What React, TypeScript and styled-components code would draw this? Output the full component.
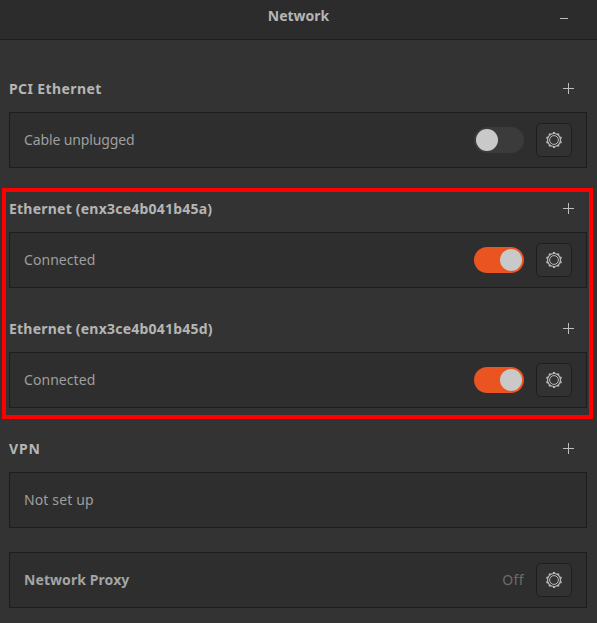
import React from 'react';
import styled, { createGlobalStyle } from 'styled-components';

const GlobalStyle = createGlobalStyle`
  * { box-sizing: border-box; }
  body {
    margin: 0;
    background: #333333;
    font-family: "Noto Sans", "Open Sans", sans-serif;
    font-size: 14px;
    line-height: 20px;
  }
`;

const Window = styled.div`
  position: relative;
  height: 623px;
  overflow: hidden;
  background: #333333;
`;

const TitleBar = styled.header`
  display: grid;
  grid-template-columns: 66px 1fr 66px;
  justify-items: center;
  height: 40px;
  padding-top: 6px;
  background: #2c2c2c;
  border-bottom: 1px solid #1e1e1e;
`;

const Text = styled.span<{ $spacing?: number }>`
  letter-spacing: ${(p) => p.$spacing ?? 0}px;
  white-space: pre;
`;

const Title = styled(Text)`
  grid-column: 2;
  color: #b5b5b5;
  font-weight: 700;
`;

const Minimize = styled.button`
  width: 8px;
  height: 1px;
  margin-top: 12px;
  padding: 0;
  border: 0;
  background: #bababa;
`;

const Content = styled.main`
  display: flex;
  flex-direction: column;
  gap: 24px;
  padding: 32px 10px 0 9px;
`;

const SectionHead = styled.div`
  display: flex;
  align-items: center;
  justify-content: space-between;
  height: 40px;
  padding: 7px 13px 14px 0;
`;

const Heading = styled(Text)`
  padding-top: 1px;
  color: #b5b5b5;
  font-weight: 700;
`;

const Panel = styled.div`
  display: flex;
  align-items: center;
  gap: 12px;
  height: 56px;
  padding: 0 14px;
  background: #2e2e2e;
  border: 1px solid #1d1d1d;
`;

const Label = styled(Text)<{ $bold?: boolean }>`
  flex: 1;
  color: ${(p) => (p.$bold ? '#a4a4a4' : '#9f9f9f')};
  font-weight: ${(p) => (p.$bold ? 700 : 400)};
`;

const Status = styled(Text)`
  color: #6c6c6c;
`;

const Switch = styled.button<{ $on: boolean }>`
  display: flex;
  align-items: center;
  justify-content: ${(p) => (p.$on ? 'flex-end' : 'flex-start')};
  width: 50px;
  height: 26px;
  padding: 0 2px;
  border: 0;
  border-radius: 13px;
  background: ${(p) => (p.$on ? '#e95420' : '#3b3b3b')};
`;

const Knob = styled.span`
  width: 22px;
  height: 22px;
  border-radius: 50%;
  background: #c9c9c9;
`;

const GearButton = styled.button`
  display: flex;
  align-items: center;
  justify-content: center;
  width: 36px;
  height: 34px;
  padding: 0;
  border: 1px solid #1e1e1e;
  border-radius: 5px;
  background: #323232;
`;

const Highlight = styled.div`
  position: absolute;
  left: 2px;
  top: 188px;
  width: 591px;
  height: 231px;
  border: 4px solid #ff0000;
  pointer-events: none;
`;

const teeth = Array.from({ length: 10 }, (_, i) => i * 36);

const Gear = () => (
  <GearButton aria-label="Settings">
    <svg width="16" height="16" viewBox="0 0 16 16" fill="none" stroke="#b8b8b8">
      <circle cx="8" cy="8" r="4.4" strokeWidth="1" />
      <circle cx="8" cy="8" r="6.5" strokeWidth="1.2" />
      {teeth.map((a) => (
        <path key={a} d="M8 0 V1.6" strokeWidth="2.2" transform={`rotate(${a} 8 8)`} />
      ))}
    </svg>
  </GearButton>
);

const Plus = () => (
  <svg width="11" height="11" viewBox="0 0 11 11" stroke="#bcbcbc" aria-label="Add">
    <path d="M5.5 0 V11 M0 5.5 H11" />
  </svg>
);

interface Section {
  heading?: string;
  headingSpacing?: number;
  label: string;
  spacing: number;
  bold?: boolean;
  on?: boolean;
  status?: string;
  gear?: boolean;
}

const sections: Section[] = [
  { heading: 'PCI Ethernet', headingSpacing: 0.4, label: 'Cable unplugged', spacing: -0.13, on: false, gear: true },
  { heading: 'Ethernet (enx3ce4b041b45a)', headingSpacing: 0.22, label: 'Connected', spacing: 0.06, on: true, gear: true },
  { heading: 'Ethernet (enx3ce4b041b45d)', headingSpacing: 0.22, label: 'Connected', spacing: 0.06, on: true, gear: true },
  { heading: 'VPN', headingSpacing: 0.8, label: 'Not set up', spacing: 0.13 },
  { label: 'Network Proxy', spacing: 0.08, bold: true, status: 'Off', gear: true },
];

export default function App() {
  return (
    <>
      <GlobalStyle />
      <Window>
        <TitleBar>
          <Title>Network</Title>
          <Minimize aria-label="Minimize" />
        </TitleBar>
        <Content>
          {sections.map((s) => (
            <section key={s.heading ?? s.label}>
              {s.heading && (
                <SectionHead>
                  <Heading $spacing={s.headingSpacing}>{s.heading}</Heading>
                  <Plus />
                </SectionHead>
              )}
              <Panel>
                <Label $spacing={s.spacing} $bold={s.bold}>{s.label}</Label>
                {s.status && <Status $spacing={0.4}>{s.status}</Status>}
                {s.on !== undefined && (
                  <Switch $on={s.on} role="switch" aria-checked={s.on}>
                    <Knob />
                  </Switch>
                )}
                {s.gear && <Gear />}
              </Panel>
            </section>
          ))}
        </Content>
        <Highlight />
      </Window>
    </>
  );
}
